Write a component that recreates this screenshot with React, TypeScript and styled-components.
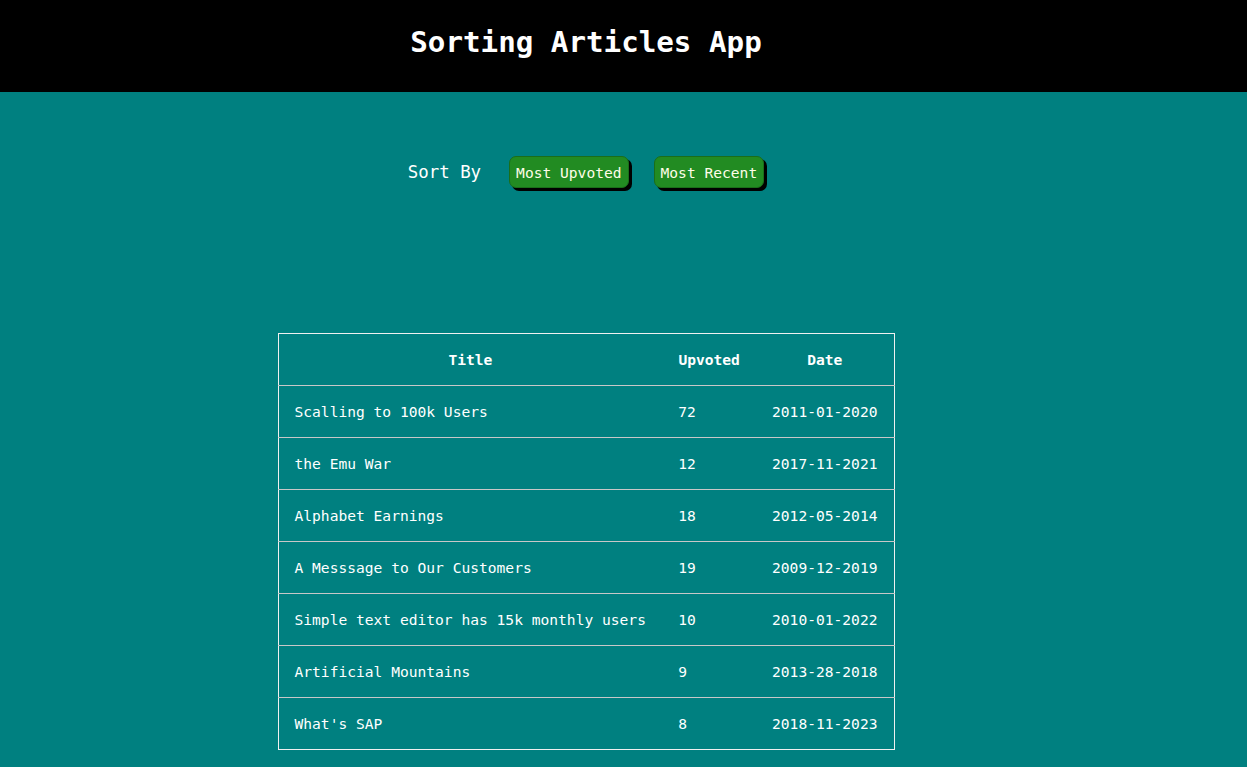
import React from "react";
import styled, { createGlobalStyle } from "styled-components";

const Global = createGlobalStyle`
  html, body { margin: 0; padding: 0; background: #008080; }
  body { font-family: "DejaVu Sans Mono", "Liberation Mono", monospace; color: #ffffff; }
`;

const Page = styled.div`
  min-height: 767px;
  background: #008080;
`;

const Header = styled.header`
  height: 86px;
  padding-bottom: 6px;
  background: #000000;
  display: flex;
  align-items: center;
  justify-content: center;
  padding-right: 75px;
`;

const Title = styled.h1`
  margin: 0;
  font-size: 29.2px;
  font-weight: bold;
  color: #ffffff;
  line-height: 1;
`;

const Main = styled.main`
  display: flex;
  flex-direction: column;
  align-items: center;
  padding-right: 75px;
`;

const Controls = styled.div`
  display: flex;
  align-items: center;
  margin-top: 64px;
  height: 32px;
`;

const Label = styled.span`
  font-size: 17.4px;
  margin-right: 28px;
`;

const SortButton = styled.button<{ $gap?: number }>`
  height: 32px;
  padding: 0 6px;
  margin-left: ${(p) => p.$gap ?? 0}px;
  background: #228b22;
  color: #fffde8;
  border: 1px solid #1a6e1a;
  border-radius: 7px;
  box-shadow: 3px 3px 0 #000000;
  font-family: "DejaVu Sans Mono", monospace;
  font-size: 14.6px;
  cursor: pointer;
`;

const Table = styled.table`
  margin-top: 145px;
  border-collapse: collapse;
  border: 1px solid #f0f0f0;
  width: 617px;
  font-size: 14.6px;
`;

const Th = styled.th<{ $w: number }>`
  width: ${(p) => p.$w}px;
  height: 51px;
  padding: 0 16px;
  text-align: center;
  font-weight: bold;
  border-bottom: 1px solid #c8c8c8;
`;

const Tr = styled.tr`
  &:not(:last-child) td { border-bottom: 1px solid #c8c8c8; }
`;

const Td = styled.td`
  height: 51px;
  padding: 0 16px;
  text-align: left;
  white-space: nowrap;
`;

const articles = [
  { title: "Scalling to 100k Users", up: 72, date: "2011-01-2020" },
  { title: "the Emu War", up: 12, date: "2017-11-2021" },
  { title: "Alphabet Earnings", up: 18, date: "2012-05-2014" },
  { title: "A Messsage to Our Customers", up: 19, date: "2009-12-2019" },
  { title: "Simple text editor has 15k monthly users", up: 10, date: "2010-01-2022" },
  { title: "Artificial Mountains", up: 9, date: "2013-28-2018" },
  { title: "What's SAP", up: 8, date: "2018-11-2023" },
];

export default function App() {
  return (
    <Page>
      <Global />
      <Header>
        <Title>Sorting Articles App</Title>
      </Header>
      <Main>
        <Controls>
          <Label>Sort By</Label>
          <SortButton>Most Upvoted</SortButton>
          <SortButton $gap={25}>Most Recent</SortButton>
        </Controls>
        <Table>
          <thead>
            <tr>
              <Th $w={352}>Title</Th>
              <Th $w={62}>Upvoted</Th>
              <Th $w={105}>Date</Th>
            </tr>
          </thead>
          <tbody>
            {articles.map((a) => (
              <Tr key={a.title}>
                <Td>{a.title}</Td>
                <Td>{a.up}</Td>
                <Td>{a.date}</Td>
              </Tr>
            ))}
          </tbody>
        </Table>
      </Main>
    </Page>
  );
}
